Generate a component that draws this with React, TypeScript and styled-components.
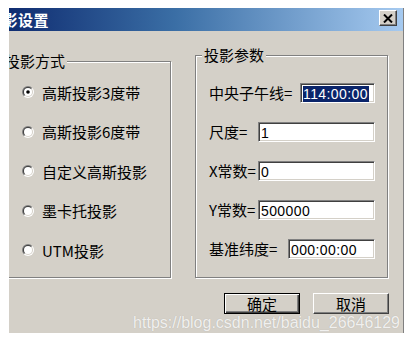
import React, { useId } from "react";
import styled, { createGlobalStyle } from "styled-components";

const FONT = '"Noto Sans CJK SC", "Noto Sans", sans-serif';

const Global = createGlobalStyle`
  html, body { margin: 0; padding: 0; background: #ffffff; }
  body { overflow: hidden; }
  * { box-sizing: border-box; }
`;

const Page = styled.div`
  width: 411px;
  height: 343px;
  padding: 8px 0 0 9px;
  overflow: hidden;
  font-family: ${FONT};
`;

const Dialog = styled.div`
  position: relative;
  width: 395px;
  height: 325px;
  background: #d4d0c8;
  border-right: 1px solid #808080;
  overflow: hidden;
`;

const Inner = styled.div`
  margin-left: -22px;
  width: calc(100% + 22px);
  display: flex;
  flex-direction: column;
`;

const TitleBar = styled.div`
  height: 23px;
  display: flex;
  align-items: center;
  justify-content: space-between;
  padding-right: 6px;
  background: linear-gradient(to right, #0a246a 0%, #3a6ea5 45%, #a6caf0 100%);
`;

const TitleText = styled.span`
  color: #ffffff;
  font-weight: 700;
  font-size: 15px;
  line-height: 20px;
  letter-spacing: 0.5px;
`;

const CloseButton = styled.div`
  align-self: flex-start;
  margin-top: 2px;
  width: 18px;
  height: 16px;
  display: flex;
  align-items: center;
  justify-content: center;
  background: #d4d0c8;
  border: 1px solid;
  border-color: #ffffff #404040 #404040 #ffffff;
  box-shadow: inset -1px -1px #808080;
`;

const Body = styled.div`
  padding-top: 15px;
  display: flex;
  flex-direction: column;
`;

const GroupRow = styled.div`
  display: flex;
  height: 232px;
  padding: 0 15px 0 8px;
  gap: 24px;
`;

const Group = styled.fieldset<{ $width: number; $top: number; $padTop: number; $padLeft: number; $padRight: number }>`
  margin: ${(p) => p.$top}px 0 0 0;
  min-width: 0;
  width: ${(p) => p.$width}px;
  flex: none;
  border: 1px solid #808080;
  box-shadow: 1px 1px 0 #ffffff, inset 1px 1px 0 #ffffff;
  padding: ${(p) => p.$padTop}px ${(p) => p.$padRight}px 0 ${(p) => p.$padLeft}px;
  display: flex;
  flex-direction: column;
`;

const Caption = styled.legend<{ $offset: number }>`
  margin-left: ${(p) => p.$offset}px;
  padding: 0 2px;
  background: #d4d0c8;
  font-size: 15px;
  line-height: 18px;
  color: #000;
`;

const OptionList = styled.div`
  display: flex;
  flex-direction: column;
  gap: 19.5px;
`;

const Option = styled.div`
  height: 20px;
  display: flex;
  align-items: center;
  gap: 8px;
  font-size: 15px;
  color: #000;
`;

const FieldList = styled.div`
  display: flex;
  flex-direction: column;
  gap: 19px;
`;

const Field = styled.div`
  height: 20px;
  display: flex;
  align-items: center;
  justify-content: space-between;
`;

const FieldLabel = styled.span`
  font-size: 15px;
  line-height: 20px;
  color: #000;
  white-space: nowrap;
`;

const TextBox = styled.div<{ $width: number }>`
  width: ${(p) => p.$width}px;
  height: 20px;
  flex: none;
  background: #ffffff;
  border: 1px solid;
  border-color: #808080 #ffffff #ffffff #808080;
  box-shadow: inset 1px 1px #404040, inset -1px -1px #d4d0c8;
  padding: 1px 2px 0 2px;
  display: flex;
  align-items: center;
  font-family: "Liberation Sans", Arial, sans-serif;
  font-size: 14px;
  letter-spacing: 0.4px;
  color: #000;
  white-space: nowrap;
  overflow: hidden;
`;

const Selection = styled.span`
  background: #0a246a;
  color: #ffffff;
  line-height: 16px;
  padding-right: 1px;
`;

const ButtonRow = styled.div`
  margin-top: 15px;
  display: flex;
  justify-content: flex-end;
  gap: 13px;
  padding-right: 14px;
`;

const Button = styled.div<{ $default?: boolean }>`
  width: 76px;
  height: 21px;
  display: flex;
  align-items: center;
  justify-content: center;
  font-size: 15px;
  color: #000;
  background: #d4d0c8;
  border: 1px solid;
  border-color: ${(p) => (p.$default ? "#000000" : "#ffffff #404040 #404040 #ffffff")};
  box-shadow: ${(p) =>
    p.$default
      ? "inset 1px 1px #ffffff, inset -1px -1px #404040, inset -2px -2px #808080"
      : "inset -1px -1px #808080"};
`;

const Watermark = styled.div`
  position: absolute;
  right: 3px;
  bottom: 1px;
  font-family: "Liberation Sans", Arial, sans-serif;
  font-size: 16px;
  line-height: 18px;
  color: rgba(255, 255, 255, 0.82);
  text-shadow: 0 0 1px rgba(0, 0, 0, 0.18);
  white-space: nowrap;
  pointer-events: none;
`;

function RadioIcon({ checked }: { checked?: boolean }) {
  const id = useId().replace(/:/g, "");
  return (
    <svg width="12" height="12" viewBox="0 0 12 12" style={{ flex: "none" }}>
      <defs>
        <linearGradient id={`o${id}`} x1="0" y1="0" x2="1" y2="1">
          <stop offset="0.45" stopColor="#808080" />
          <stop offset="0.55" stopColor="#ffffff" />
        </linearGradient>
        <linearGradient id={`i${id}`} x1="0" y1="0" x2="1" y2="1">
          <stop offset="0.45" stopColor="#404040" />
          <stop offset="0.55" stopColor="#d4d0c8" />
        </linearGradient>
      </defs>
      <circle cx="6" cy="6" r="6" fill={`url(#o${id})`} />
      <circle cx="6" cy="6" r="5" fill={`url(#i${id})`} />
      <circle cx="6" cy="6" r="4" fill="#ffffff" />
      {checked && <circle cx="6" cy="6" r="1.8" fill="#000000" />}
    </svg>
  );
}

function CloseIcon() {
  return (
    <svg width="10" height="9" viewBox="0 0 10 9">
      <path d="M1 0.5 L9 8.5 M9 0.5 L1 8.5" stroke="#000" strokeWidth="2" />
    </svg>
  );
}

const options = [
  { label: "高斯投影3度带", checked: true },
  { label: "高斯投影6度带" },
  { label: "自定义高斯投影" },
  { label: "墨卡托投影" },
  { label: "UTM投影" },
];

const fields = [
  { label: "中央子午线=", value: "114:00:00", width: 75, selected: true },
  { label: "尺度=", value: "1", width: 117 },
  { label: "X常数=", value: "0", width: 117 },
  { label: "Y常数=", value: "500000", width: 117 },
  { label: "基准纬度=", value: "000:00:00", width: 87 },
];

export default function App() {
  return (
    <>
      <Global />
      <Page>
        <Dialog>
          <Inner>
            <TitleBar>
              <TitleText>投影设置</TitleText>
              <CloseButton>
                <CloseIcon />
              </CloseButton>
            </TitleBar>
            <Body>
              <GroupRow>
                <Group $width={176} $top={6} $padTop={12} $padLeft={26} $padRight={8}>
                  <Caption $offset={-19}>投影方式</Caption>
                  <OptionList>
                    {options.map((o) => (
                      <Option key={o.label}>
                        <RadioIcon checked={o.checked} />
                        <span>{o.label}</span>
                      </Option>
                    ))}
                  </OptionList>
                </Group>
                <Group $width={193} $top={0} $padTop={19} $padLeft={13} $padRight={12}>
                  <Caption $offset={-7}>投影参数</Caption>
                  <FieldList>
                    {fields.map((f) => (
                      <Field key={f.label}>
                        <FieldLabel>{f.label}</FieldLabel>
                        <TextBox $width={f.width}>
                          {f.selected ? <Selection>{f.value}</Selection> : f.value}
                        </TextBox>
                      </Field>
                    ))}
                  </FieldList>
                </Group>
              </GroupRow>
              <ButtonRow>
                <Button $default>确定</Button>
                <Button>取消</Button>
              </ButtonRow>
            </Body>
          </Inner>
          <Watermark>https://blog.csdn.net/baidu_26646129</Watermark>
        </Dialog>
      </Page>
    </>
  );
}
